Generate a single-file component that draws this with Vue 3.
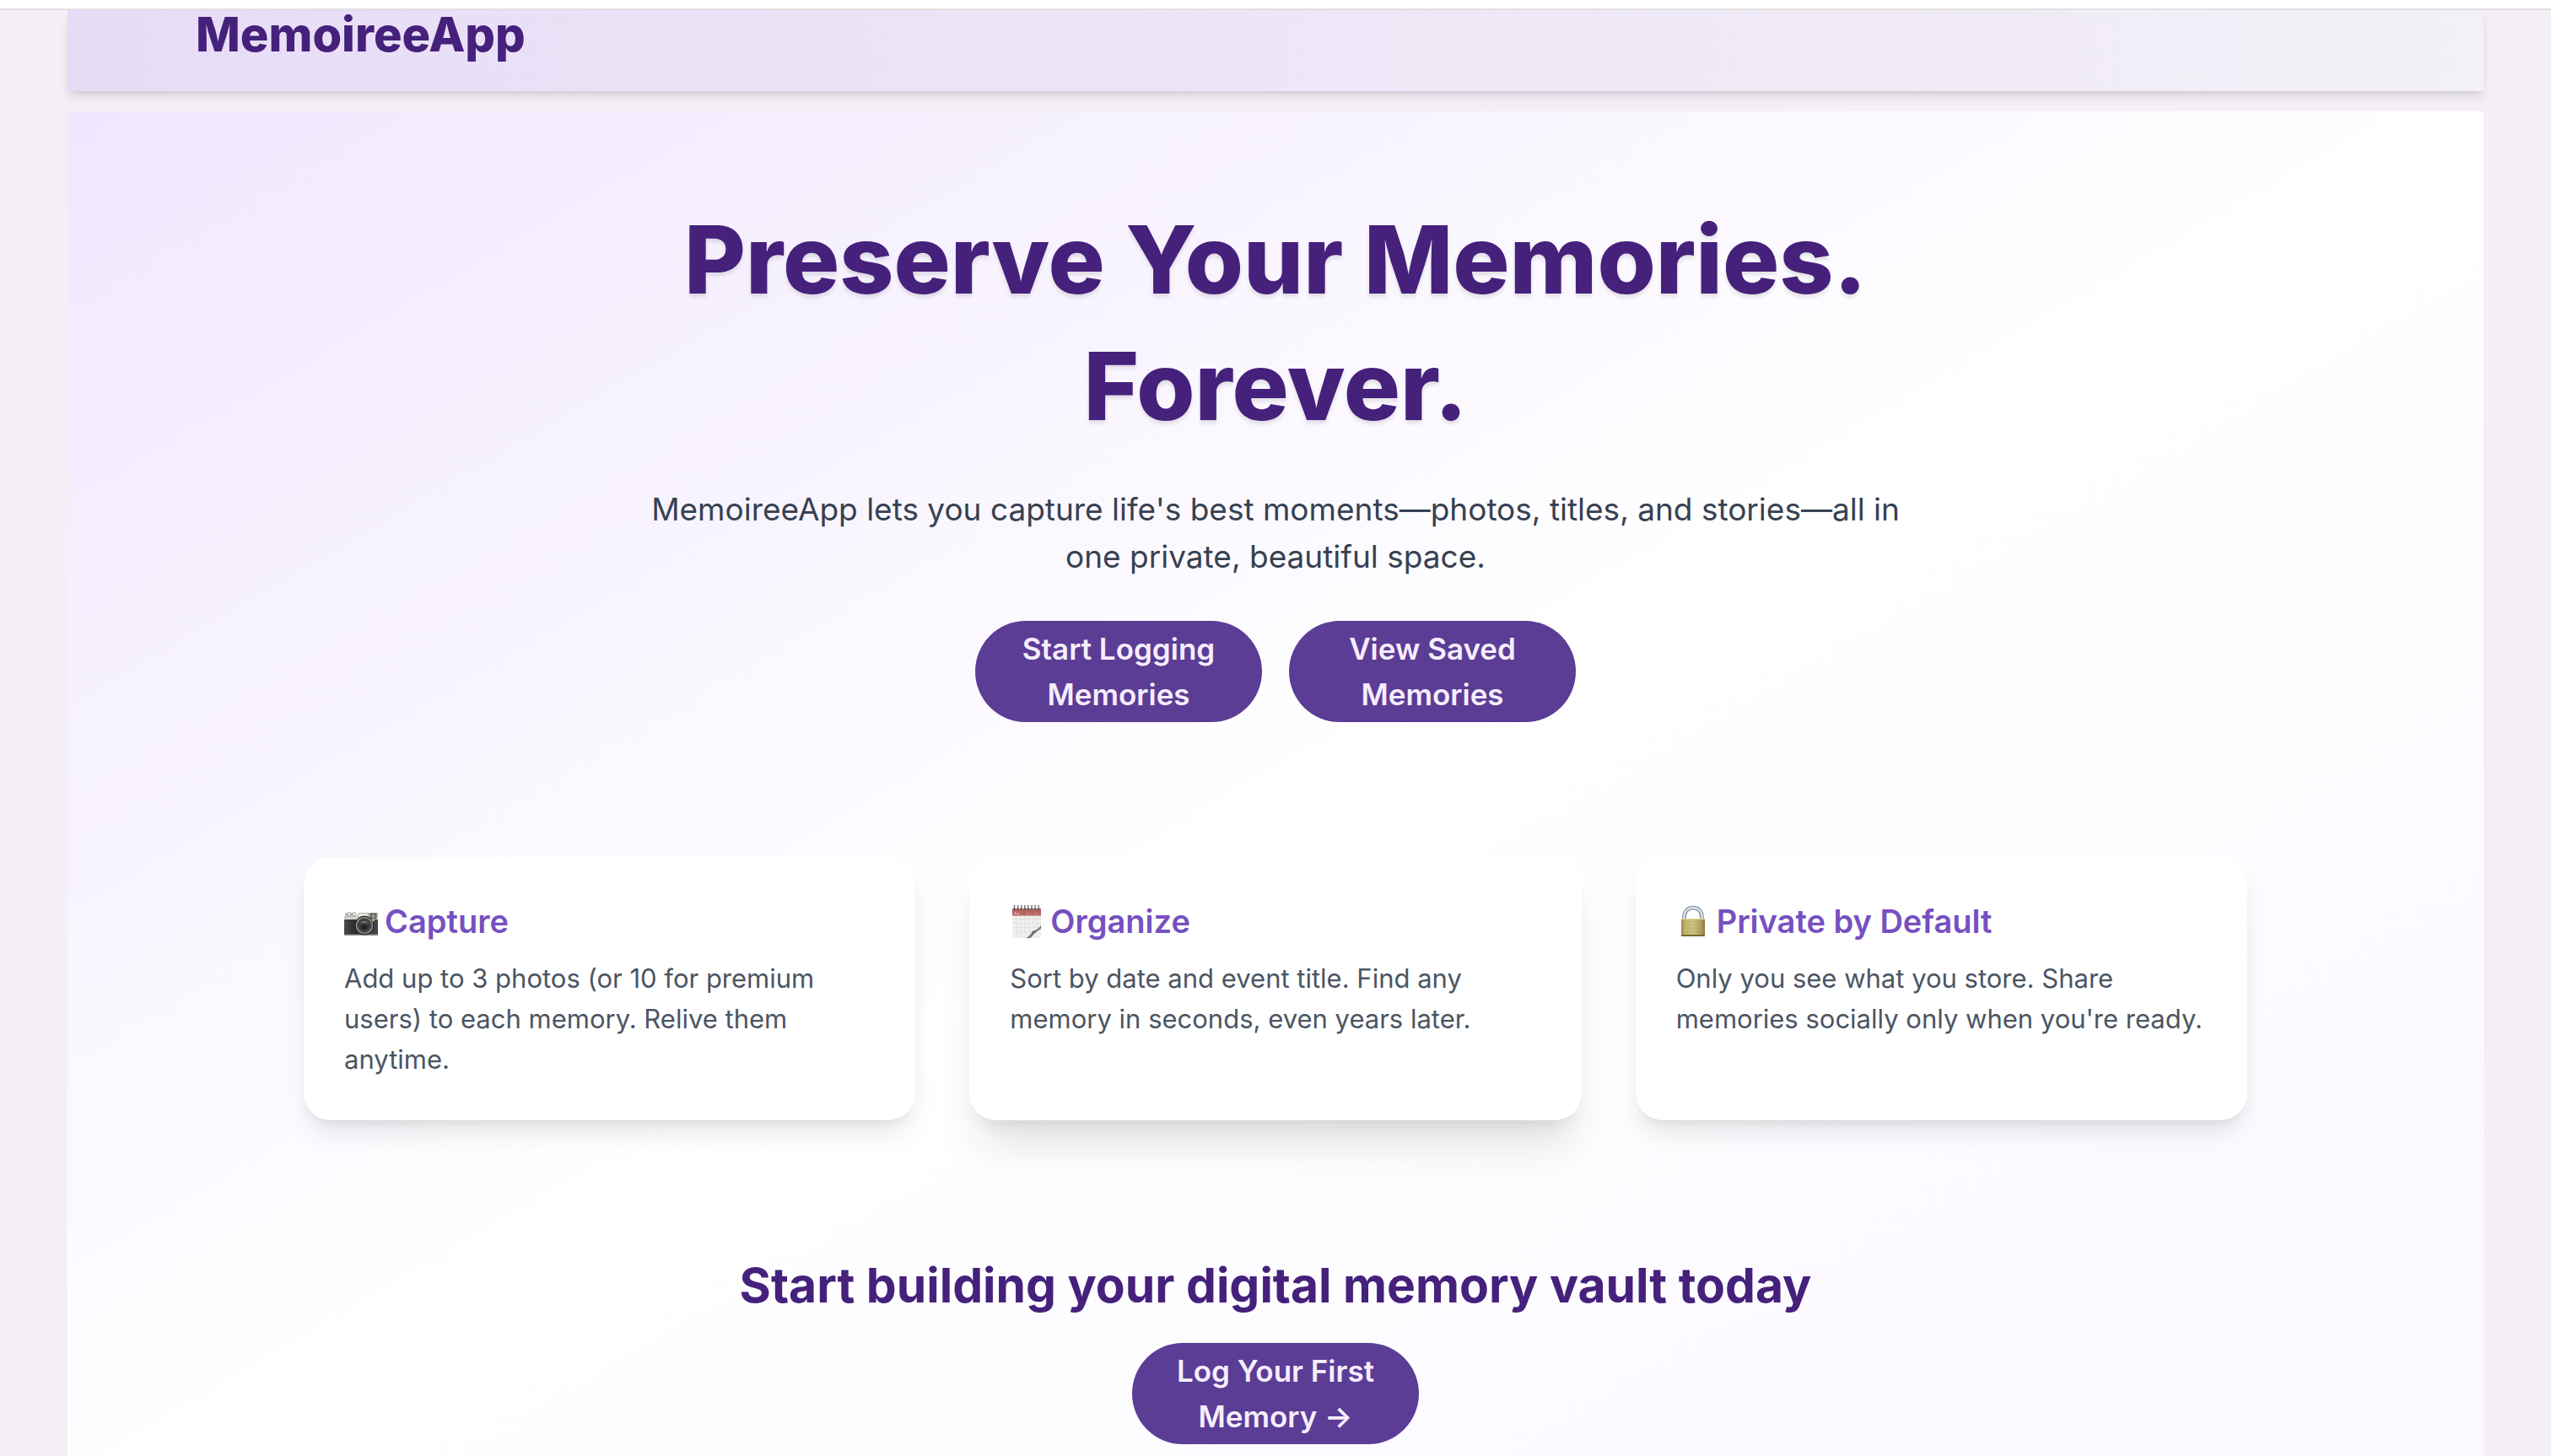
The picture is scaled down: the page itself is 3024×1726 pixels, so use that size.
<script setup>
const features = [
  {
    icon: 'camera',
    title: 'Capture',
    text: 'Add up to 3 photos (or 10 for premium users) to each memory. Relive them anytime.',
  },
  {
    icon: 'calendar',
    title: 'Organize',
    text: 'Sort by date and event title. Find any memory in seconds, even years later.',
    raised: true,
  },
  {
    icon: 'lock',
    title: 'Private by Default',
    text: "Only you see what you store. Share memories socially only when you're ready.",
  },
]
</script>

<template>
  <div class="page">
    <div class="topline"></div>
    <div class="shell">
      <header class="header">
        <a class="logo" href="#">MemoireeApp</a>
      </header>

      <main class="main">
        <section class="hero">
          <h1>Preserve Your Memories. Forever.</h1>
          <p>
            MemoireeApp lets you capture life's best moments—photos, titles, and stories—all in
            one private, beautiful space.
          </p>
          <div class="actions">
            <button type="button" class="btn">Start Logging Memories</button>
            <button type="button" class="btn">View Saved Memories</button>
          </div>
        </section>

        <section class="features">
          <article
            v-for="f in features"
            :key="f.title"
            class="card"
            :class="{ raised: f.raised }"
          >
            <h3>
              <svg v-if="f.icon === 'camera'" class="icon" viewBox="0 0 40 40" aria-hidden="true">
                <defs>
                  <linearGradient id="cam-top" x1="0" y1="0" x2="0" y2="1">
                    <stop offset="0" stop-color="#aaa9a6" />
                    <stop offset="1" stop-color="#dcdbd8" />
                  </linearGradient>
                  <linearGradient id="cam-body" x1="0" y1="0" x2="1" y2="0">
                    <stop offset="0" stop-color="#4b4b4b" />
                    <stop offset="0.3" stop-color="#2c2c2c" />
                    <stop offset="1" stop-color="#464646" />
                  </linearGradient>
                </defs>
                <rect x="1" y="10" width="13" height="5" fill="#bdbcb9" />
                <rect x="4" y="9.500" width="3.500" height="4" rx="1" fill="#e8e8e6" stroke="#838380" stroke-width=".6" />
                <rect x="10" y="9.500" width="3.500" height="4" rx="1" fill="#e8e8e6" stroke="#838380" stroke-width=".6" />
                <path d="M0 14 H15 L17 10 H39 Q40 10 40 11 V18 H0 Z" fill="url(#cam-top)" />
                <rect x="17" y="11" width="11" height="4" fill="#f4f1e8" stroke="#b5b2aa" stroke-width=".6" />
                <rect x="31" y="11" width="7" height="6" fill="#77736c" stroke="#4b4947" stroke-width=".7" />
                <rect x="33" y="12.500" width="3" height="3" fill="#a8a49b" />
                <path d="M0 18 H40 V36 Q40 37 39 37 H1 Q0 37 0 36 Z" fill="url(#cam-body)" />
                <rect x="0" y="35.500" width="40" height="1.500" fill="#8d8d8d" />
                <circle cx="24" cy="25" r="11" fill="#4a4a4a" stroke="#222" stroke-width="1" />
                <circle cx="24" cy="25" r="9.500" fill="none" stroke="#9b9b9b" stroke-width="1.200" />
                <circle cx="24" cy="25" r="7" fill="#3a3b3c" />
                <path d="M18 23 Q24 16 30 23 Q24 21 18 23Z" fill="#6d7072" />
                <ellipse cx="24" cy="27" rx="4" ry="2.500" fill="#202122" />
                <circle cx="34.500" cy="19" r="1.300" fill="#f0c04a" />
              </svg>

              <svg v-else-if="f.icon === 'calendar'" class="icon" viewBox="0 0 40 40" aria-hidden="true">
                <defs>
                  <linearGradient id="cal-curl" x1="0" y1="0" x2="1" y2="1">
                    <stop offset="0.250" stop-color="#8a8a8a" />
                    <stop offset="0.450" stop-color="#4c4c4c" />
                    <stop offset="0.800" stop-color="#c8c8c8" />
                  </linearGradient>
                </defs>
                <rect x="3" y="5" width="34" height="35" fill="#f1f1f1" />
                <path
                  d="M3 17.500H37M3 22.500H37M3 27.500H37M3 32.500H37M8 13V40M13 13V40M18 13V40M23 13V40M28 13V40M33 13V40"
                  stroke="#dedede"
                  stroke-width=".8"
                />
                <rect x="3" y="5" width="34" height="8.500" fill="#b46663" />
                <path d="M5 12 L6.500 9.500 L8 12 M9 12 L10 10 L11 12" stroke="#edcfcd" stroke-width=".8" fill="none" />
                <path d="M19 11H25M28 11H34" stroke="#c98581" stroke-width="1" />
                <path
                  d="M5.500 1V7M9.600 1V7M13.700 1V7M17.800 1V7M21.900 1V7M26 1V7M30.100 1V7M34.200 1V7"
                  stroke="#4d4d55"
                  stroke-width="1.400"
                />
                <path
                  d="M5.500 2V3.500M9.600 2V3.500M13.700 2V3.500M17.800 2V3.500M21.900 2V3.500M26 2V3.500M30.100 2V3.500M34.200 2V3.500"
                  stroke="#a9abb5"
                  stroke-width="1.600"
                />
                <path d="M19 40 Q24 38 27 32 Q34 30 37 25 V40 Z" fill="url(#cal-curl)" />
                <path d="M25 40 Q29 34 37 29 V40 Z" fill="#f1f1f1" />
              </svg>

              <svg v-else class="icon" viewBox="0 0 40 40" aria-hidden="true">
                <defs>
                  <linearGradient id="lock-body" x1="0" y1="0" x2="1" y2="0">
                    <stop offset="0" stop-color="#98894a" />
                    <stop offset="0.150" stop-color="#bfb56c" />
                    <stop offset="0.500" stop-color="#cbc47f" />
                    <stop offset="0.850" stop-color="#a89c5a" />
                    <stop offset="1" stop-color="#85783f" />
                  </linearGradient>
                </defs>
                <path d="M9.500 18V15C9.500 0.500 30.500 0.500 30.500 15V18" fill="none" stroke="#7e8c9c" stroke-width="4.600" />
                <path d="M9.500 18V15C9.500 0.500 30.500 0.500 30.500 15V18" fill="none" stroke="#c6d3e0" stroke-width="2.600" />
                <path d="M9 18V15C9 0 31 0 31 15V18" fill="none" stroke="#eef4fa" stroke-width=".8" />
                <rect x="6" y="17" width="28" height="21" rx="1" fill="url(#lock-body)" />
                <path d="M6 20.500H34M6 24.500H34M6 28.500H34M6 32.500H34" stroke="#9a8d4b" stroke-opacity=".3" stroke-width=".8" />
                <path d="M6 17.500H34" stroke="#e0d795" stroke-width="1" />
                <path d="M6 37H34" stroke="#776a35" stroke-width="2" />
              </svg>
              <span>{{ f.title }}</span>
            </h3>
            <p>{{ f.text }}</p>
          </article>
        </section>

        <section class="cta">
          <h2>Start building your digital memory vault today</h2>
          <button type="button" class="btn">Log Your First Memory →</button>
        </section>
      </main>
    </div>
  </div>
</template>

<style>
body {
  margin: 0;
  background: #f4eff7;
}
</style>

<style scoped>
.page {
  height: 100vh;
  overflow: hidden;
  background: #f4eff7;
  font-family: Inter, "Liberation Sans", sans-serif;
}
.topline {
  position: relative;
  height: 10px;
  background: #fff;
  border-bottom: 2px solid #e1e1e1;
}
.shell {
  padding: 0 80px;
}
.header {
  display: flex;
  margin-bottom: 24px;
  padding: 0 152px 38px;
  background: linear-gradient(to right, #e7dcf6, #f3f0f7);
  box-shadow: 0 8px 12px -2px rgba(0, 0, 0, 0.1), 0 4px 8px -4px rgba(0, 0, 0, 0.1);
}
.logo {
  color: #45217c;
  font-size: 56px;
  font-weight: 800;
  line-height: 58px;
  text-decoration: none;
}
.main {
  padding: 100px 0 96px;
  background: linear-gradient(to bottom right, #f0e7ff, #fff, #faf7ff);
}
.hero {
  display: flex;
  flex-direction: column;
  align-items: center;
  text-align: center;
}
h1,
h2,
h3,
p {
  margin: 0;
}
h1 {
  max-width: 1728px;
  color: #45217c;
  font-size: 112px;
  font-weight: 800;
  line-height: 150px;
  text-shadow: 0 4px 4px rgba(0, 0, 0, 0.1);
}
.hero p {
  max-width: 1536px;
  margin-top: 44px;
  color: #374151;
  font-size: 37px;
  line-height: 56px;
}
.actions {
  display: flex;
  gap: 32px;
  margin-top: 48px;
}
.btn {
  width: 340px;
  padding: 6px 48px;
  border: 0;
  border-radius: 60px;
  background: #5b3d96;
  color: #f6edfc;
  font-family: inherit;
  font-size: 35px;
  font-weight: 600;
  line-height: 54px;
  text-align: center;
}
.features {
  display: grid;
  grid-template-columns: repeat(3, 1fr);
  gap: 64px;
  max-width: 2304px;
  margin: 160px auto;
}
.card {
  padding: 48px;
  border-radius: 32px;
  background: #fff;
  box-shadow: 0 20px 30px -6px rgba(0, 0, 0, 0.1), 0 8px 12px -8px rgba(0, 0, 0, 0.1);
}
.card.raised {
  box-shadow: 0 40px 50px -10px rgba(0, 0, 0, 0.1), 0 16px 20px -12px rgba(0, 0, 0, 0.1);
}
.card h3 {
  display: flex;
  align-items: center;
  gap: 8px;
  margin-bottom: 16px;
  color: #7650c0;
  font-size: 38px;
  font-weight: 600;
  line-height: 56px;
}
.icon {
  width: 40px;
  height: 40px;
}
.card p {
  color: #4b5563;
  font-size: 31px;
  line-height: 48px;
}
.cta {
  display: flex;
  flex-direction: column;
  align-items: center;
  text-align: center;
}
.cta h2 {
  margin-bottom: 32px;
  color: #45217c;
  font-size: 57px;
  font-weight: 700;
  line-height: 72px;
}
</style>
